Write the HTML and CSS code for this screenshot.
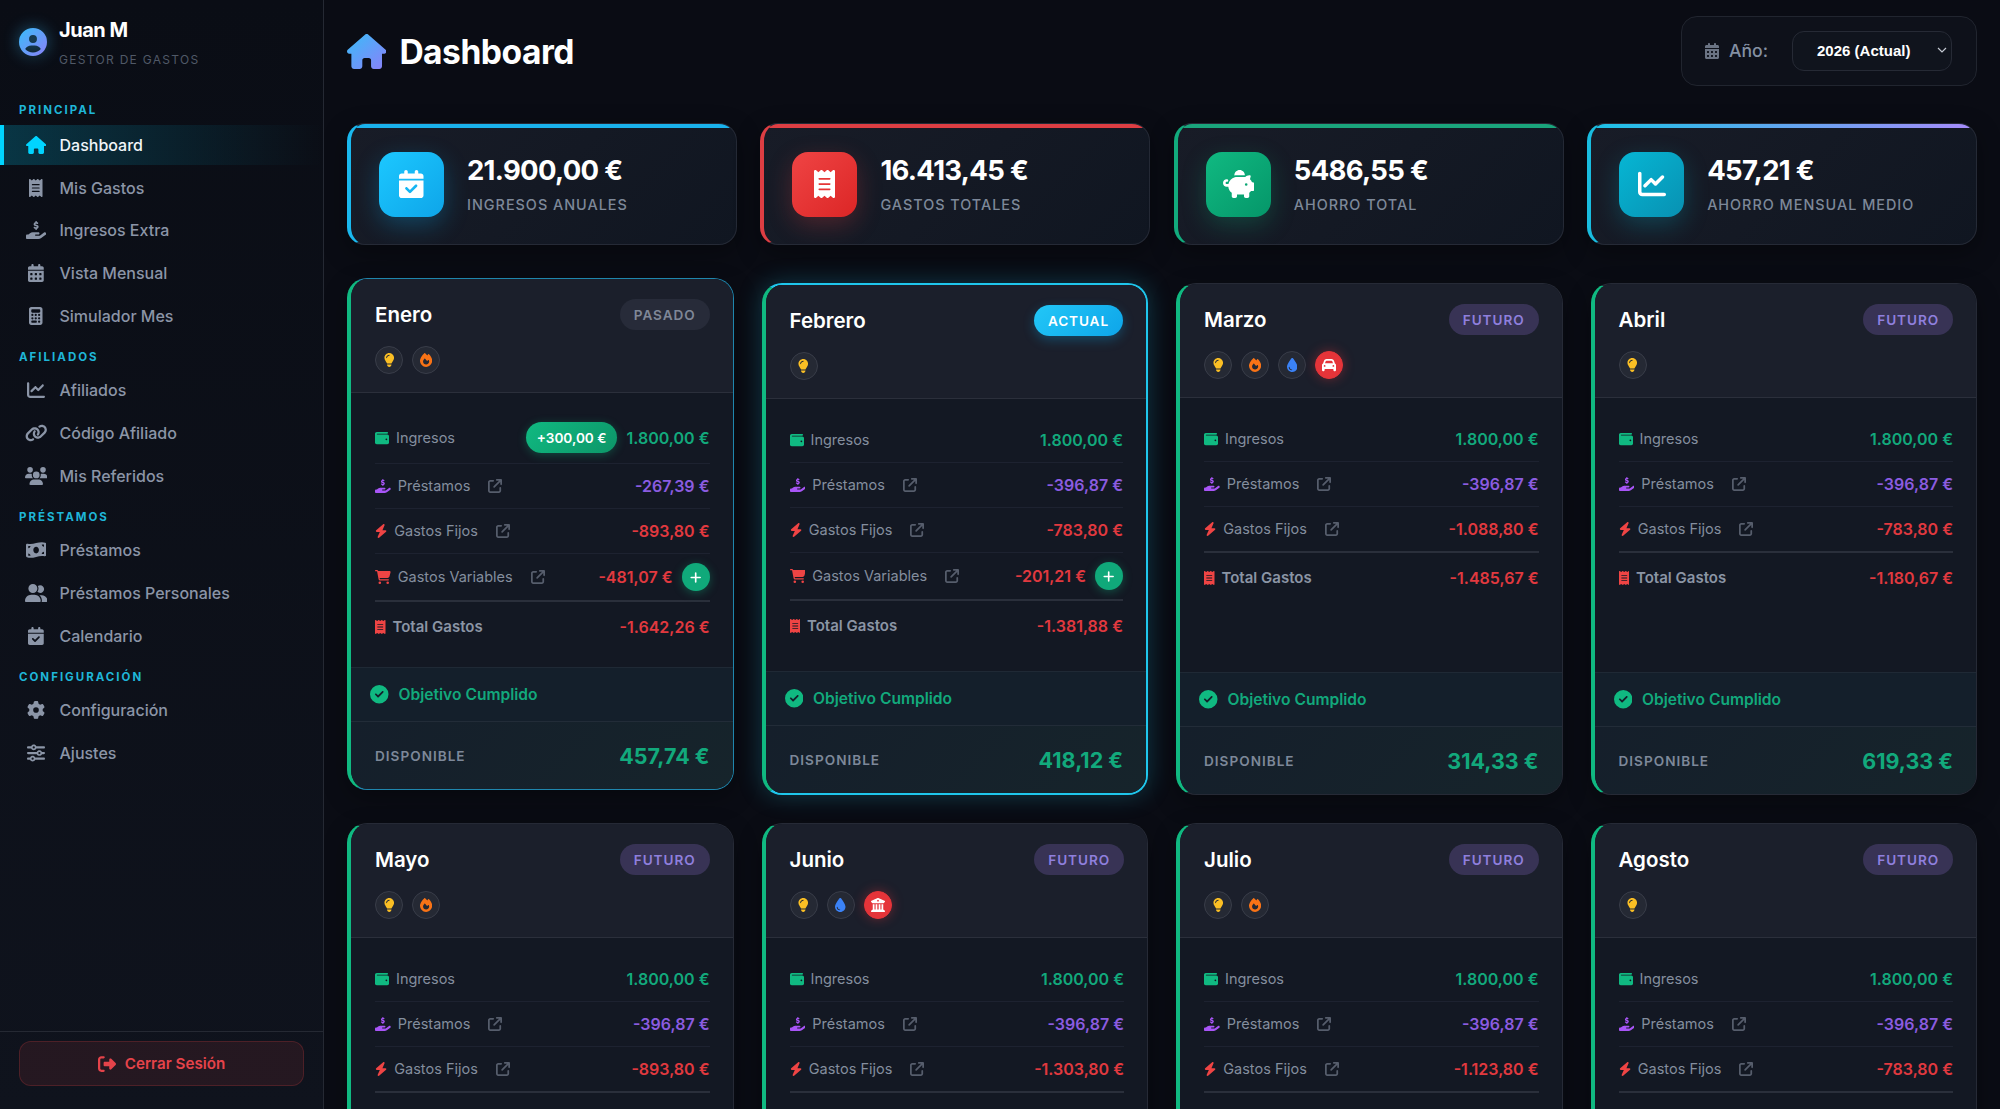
FILE: index.html
```html
<!DOCTYPE html>
<html lang="es">
<head>
  <meta charset="UTF-8">
  <title>Dashboard</title>
  <link rel="stylesheet" href="styles.css">
</head>
<body>
  <!-- Icon paths, reused below with <use> -->
  <svg class="sprite" aria-hidden="true">
    <defs>
      <linearGradient id="brand" x1="0" y1="0" x2="1" y2="1">
        <stop offset="0" stop-color="#38bdf8"/>
        <stop offset="1" stop-color="#8b80f9"/>
      </linearGradient>
      <path id="house" d="M575.8 255.5c0 18-15 32.1-32 32.1h-32l.7 160.2c0 2.7-.2 5.4-.5 8.1V472c0 22.1-17.9 40-40 40H456c-1.1 0-2.2 0-3.3-.1c-1.4 .1-2.8 .1-4.2 .1H416 392c-22.1 0-40-17.9-40-40V448 384c0-17.7-14.3-32-32-32H256c-17.7 0-32 14.3-32 32v64 24c0 22.1-17.9 40-40 40H160 128.1c-1.5 0-3-.1-4.5-.2c-1.2 .1-2.4 .2-3.6 .2H104c-22.1 0-40-17.9-40-40V360c0-.9 0-1.9 .1-2.8V287.6H32c-18 0-32-14-32-32.1c0-9 3-17 10-24L266.4 8c7-7 15-8 22-8s15 2 21 7L564.8 231.5c8 7 12 15 11 24z"/>
      <path id="receipt" d="M14 2.2C22.5-1.7 32.5-.3 39.6 5.8L80 40.4 120.4 5.8c9-7.7 22.3-7.7 31.2 0L192 40.4 232.4 5.8c9-7.7 22.3-7.7 31.2 0L304 40.4 344.4 5.8c7.1-6.1 17.1-7.5 25.6-3.6s14 12.4 14 21.8V488c0 9.4-5.5 17.9-14 21.8s-18.5 2.5-25.6-3.6L304 471.6l-40.4 34.6c-9 7.7-22.3 7.7-31.2 0L192 471.6l-40.4 34.6c-9 7.7-22.3 7.7-31.2 0L80 471.6 39.6 506.2c-7.1 6.1-17.1 7.5-25.6 3.6S0 497.4 0 488V24C0 14.6 5.5 6.1 14 2.2zM96 144c-8.8 0-16 7.2-16 16s7.2 16 16 16H288c8.8 0 16-7.2 16-16s-7.2-16-16-16H96zM80 352c0 8.8 7.2 16 16 16H288c8.8 0 16-7.2 16-16s-7.2-16-16-16H96c-8.8 0-16 7.2-16 16zM96 240c-8.8 0-16 7.2-16 16s7.2 16 16 16H288c8.8 0 16-7.2 16-16s-7.2-16-16-16H96z"/>
      <path id="hand" d="M312 24V34.5c6.4 1.2 12.6 2.7 18.2 4.2c12.8 3.4 20.4 16.6 17 29.4s-16.6 20.4-29.4 17c-10.9-2.9-21.1-4.9-30.2-5c-7.3-.1-14.7 1.7-19.4 4.4c-2.1 1.3-3.1 2.4-3.5 3c-.3 .5-.7 1.2-.7 2.8c0 .3 0 .5 0 .6c.2 .2 .9 1.2 3.3 2.6c5.8 3.5 14.4 6.2 27.4 10.1l.9 .3 0 0c11.1 3.3 25.9 7.8 37.9 15.3c13.7 8.6 26.1 22.9 26.4 44.9c.3 22.5-11.4 38.9-26.7 48.5c-6.7 4.1-13.9 7-21.3 8.8V232c0 13.3-10.7 24-24 24s-24-10.7-24-24V220.6c-9.5-2.3-18.2-5.3-25.6-7.8c-2.1-.7-4.1-1.4-6-2c-12.6-4.2-19.4-17.8-15.2-30.4s17.8-19.4 30.4-15.2c2.6 .9 5 1.7 7.3 2.5c13.6 4.6 23.4 7.9 33.9 8.3c8 .3 15.1-1.6 19.2-4.1c1.9-1.2 2.8-2.2 3.2-2.9c.4-.6 .9-1.8 .8-4.1l0-.2c0-1 0-2.1-4-4.6c-5.7-3.6-14.3-6.4-27.1-10.3l-1.9-.6c-10.8-3.2-25-7.5-36.4-14.4c-13.5-8.1-26.5-22-26.6-44.1c-.1-22.9 12.9-38.6 27.7-47.4c6.4-3.8 13.3-6.4 20.2-8.2V24c0-13.3 10.7-24 24-24s24 10.7 24 24zM568.2 336.3c13.1 17.8 9.3 42.8-8.5 55.9L433.1 485.5c-23.4 17.2-51.6 26.5-80.7 26.5H192 32c-17.7 0-32-14.3-32-32V416c0-17.7 14.3-32 32-32H68.8l44.9-36c22.7-18.2 50.9-28 80-28H272h16 64c17.7 0 32 14.3 32 32s-14.3 32-32 32H288 272c-8.8 0-16 7.2-16 16s7.2 16 16 16H392.6l119.7-88.2c17.8-13.1 42.8-9.3 55.9 8.5z"/>
      <path id="calendar" d="M128 0c17.7 0 32 14.3 32 32V64H288V32c0-17.7 14.3-32 32-32s32 14.3 32 32V64h48c26.5 0 48 21.5 48 48v48H0V112C0 85.5 21.5 64 48 64H96V32c0-17.7 14.3-32 32-32zM0 192H448V464c0 26.5-21.5 48-48 48H48c-26.5 0-48-21.5-48-48V192zm64 80v32c0 8.8 7.2 16 16 16h32c8.8 0 16-7.2 16-16V272c0-8.8-7.2-16-16-16H80c-8.8 0-16 7.2-16 16zm128 0v32c0 8.8 7.2 16 16 16h32c8.8 0 16-7.2 16-16V272c0-8.8-7.2-16-16-16H208c-8.8 0-16 7.2-16 16zm144-16c-8.8 0-16 7.2-16 16v32c0 8.8 7.2 16 16 16h32c8.8 0 16-7.2 16-16V272c0-8.8-7.2-16-16-16H336zM64 400v32c0 8.8 7.2 16 16 16h32c8.8 0 16-7.2 16-16V400c0-8.8-7.2-16-16-16H80c-8.8 0-16 7.2-16 16zm144-16c-8.8 0-16 7.2-16 16v32c0 8.8 7.2 16 16 16h32c8.8 0 16-7.2 16-16V400c0-8.8-7.2-16-16-16H208zm112 16v32c0 8.8 7.2 16 16 16h32c8.8 0 16-7.2 16-16V400c0-8.8-7.2-16-16-16H336c-8.8 0-16 7.2-16 16z"/>
      <path id="calcheck" d="M128 0c17.7 0 32 14.3 32 32V64H288V32c0-17.7 14.3-32 32-32s32 14.3 32 32V64h48c26.5 0 48 21.5 48 48v48H0V112C0 85.5 21.5 64 48 64H96V32c0-17.7 14.3-32 32-32zM0 192H448V464c0 26.5-21.5 48-48 48H48c-26.5 0-48-21.5-48-48V192zM329 305c9.4-9.4 9.4-24.6 0-33.9s-24.6-9.4-33.9 0l-95 95-47-47c-9.4-9.4-24.6-9.4-33.9 0s-9.4 24.6 0 33.9l64 64c9.4 9.4 24.6 9.4 33.9 0L329 305z"/>
      <path id="calculator" d="M64 0C28.7 0 0 28.7 0 64V448c0 35.3 28.7 64 64 64H320c35.3 0 64-28.7 64-64V64c0-35.3-28.7-64-64-64H64zM96 64H288c17.7 0 32 14.3 32 32v32c0 17.7-14.3 32-32 32H96c-17.7 0-32-14.3-32-32V96c0-17.7 14.3-32 32-32zm32 160a32 32 0 1 1 -64 0 32 32 0 1 1 64 0zM96 352a32 32 0 1 1 0-64 32 32 0 1 1 0 64zM64 416c0-17.7 14.3-32 32-32h96c17.7 0 32 14.3 32 32s-14.3 32-32 32H96c-17.7 0-32-14.3-32-32zM192 256a32 32 0 1 1 0-64 32 32 0 1 1 0 64zm32 64a32 32 0 1 1 -64 0 32 32 0 1 1 64 0zm64-64a32 32 0 1 1 0-64 32 32 0 1 1 0 64zm32 64a32 32 0 1 1 -64 0 32 32 0 1 1 64 0zM288 448a32 32 0 1 1 0-64 32 32 0 1 1 0 64z"/>
      <path id="chart" d="M64 64c0-17.7-14.3-32-32-32S0 46.3 0 64V400c0 44.2 35.8 80 80 80H480c17.7 0 32-14.3 32-32s-14.3-32-32-32H80c-8.8 0-16-7.2-16-16V64zm406.6 86.6c12.5-12.5 12.5-32.8 0-45.3s-32.8-12.5-45.3 0L320 210.7l-57.4-57.4c-12.5-12.5-32.8-12.5-45.3 0l-112 112c-12.5 12.5-12.5 32.8 0 45.3s32.8 12.5 45.3 0L240 221.3l57.4 57.4c12.5 12.5 32.8 12.5 45.3 0l128-128z"/>
      <path id="link" d="M579.8 267.7c56.5-56.5 56.5-148 0-204.5c-50-50-128.8-56.5-186.3-15.4l-1.6 1.1c-14.4 10.3-17.7 30.3-7.4 44.6s30.3 17.7 44.6 7.4l1.6-1.1c32.1-22.9 76-19.3 103.8 8.6c31.5 31.5 31.5 82.5 0 114L422.3 334.8c-31.5 31.5-82.5 31.5-114 0c-27.9-27.9-31.5-71.8-8.6-103.8l1.1-1.6c10.3-14.4 6.9-34.4-7.4-44.6s-34.4-6.9-44.6 7.4l-1.1 1.6C206.5 251.2 213 330 263 380c56.5 56.5 148 56.5 204.5 0L579.8 267.7zM60.2 244.3c-56.5 56.5-56.5 148 0 204.5c50 50 128.8 56.5 186.3 15.4l1.6-1.1c14.4-10.3 17.7-30.3 7.4-44.6s-30.3-17.7-44.6-7.4l-1.6 1.1c-32.1 22.9-76 19.3-103.8-8.6C74 372 74 321 105.5 289.5L217.7 177.2c31.5-31.5 82.5-31.5 114 0c27.9 27.9 31.5 71.8 8.6 103.9l-1.1 1.6c-10.3 14.4-6.9 34.4 7.4 44.6s34.4 6.9 44.6-7.4l1.1-1.6C433.5 260.8 427 182 377 132c-56.5-56.5-148-56.5-204.5 0L60.2 244.3z"/>
      <path id="users" d="M144 0a80 80 0 1 1 0 160A80 80 0 1 1 144 0zM512 0a80 80 0 1 1 0 160A80 80 0 1 1 512 0zM0 298.7C0 239.8 47.8 192 106.7 192h42.7c15.9 0 31 3.5 44.6 9.7c-1.3 7.2-1.9 14.7-1.9 22.3c0 38.2 16.8 72.5 43.3 96c-.2 0-.4 0-.7 0H21.3C9.6 320 0 310.4 0 298.7zM405.3 320c-.2 0-.4 0-.7 0c26.6-23.5 43.3-57.8 43.3-96c0-7.6-.7-15-1.9-22.3c13.6-6.3 28.7-9.7 44.6-9.7h42.7C592.2 192 640 239.8 640 298.7c0 11.8-9.6 21.3-21.3 21.3H405.3zM224 224a96 96 0 1 1 192 0 96 96 0 1 1 -192 0zM128 485.3C128 411.7 187.7 352 261.3 352H378.7C452.3 352 512 411.7 512 485.3c0 14.7-11.9 26.7-26.7 26.7H154.7c-14.7 0-26.7-11.9-26.7-26.7z"/>
      <path id="money" d="M0 112.5V422.3c0 18 10.1 35 27 41.3c87 32.5 174 10.3 261-11.9c79.8-20.3 159.6-40.7 239.3-18.9c23 6.3 48.7-9.5 48.7-33.4V89.7c0-18-10.1-35-27-41.3C462 15.9 375 38.1 288 60.3C208.2 80.6 128.4 100.9 48.7 79.1C25.6 72.8 0 88.6 0 112.5zM288 352c-44.2 0-80-43-80-96s35.8-96 80-96s80 43 80 96s-35.8 96-80 96zM64 352c35.3 0 64 28.7 64 64H64V352zm64-208c0 35.3-28.7 64-64 64V144h64zM512 304v64H448c0-35.3 28.7-64 64-64zM448 96h64v64c-35.3 0-64-28.7-64-64z"/>
      <path id="group" d="M96 128a128 128 0 1 1 256 0A128 128 0 1 1 96 128zM0 482.3C0 383.8 79.8 304 178.3 304h91.4C368.2 304 448 383.8 448 482.3c0 16.4-13.3 29.7-29.7 29.7H29.7C13.3 512 0 498.7 0 482.3zM609.3 512H471.4c5.4-9.4 8.6-20.3 8.6-32v-8c0-60.7-27.1-115.2-69.8-151.8c2.4-.1 4.7-.2 7.1-.2h61.4C567.8 320 640 392.2 640 481.3c0 17-13.8 30.7-30.7 30.7zM432 256c-31 0-59-12.6-79.3-32.9C372.4 196.5 384 163.6 384 128c0-26.8-6.6-52.1-18.3-74.3C384.3 40.1 407.2 32 432 32c61.9 0 112 50.1 112 112s-50.1 112-112 112z"/>
      <path id="gear" d="M495.9 166.6c3.2 8.7 .5 18.4-6.4 24.6l-43.3 39.4c1.1 8.3 1.7 16.8 1.7 25.4s-.6 17.1-1.7 25.4l43.3 39.4c6.9 6.2 9.6 15.9 6.4 24.6c-4.4 11.9-9.7 23.3-15.8 34.3l-4.7 8.1c-6.6 11-14 21.4-22.1 31.2c-5.9 7.2-15.7 9.6-24.5 6.8l-55.7-17.7c-13.4 10.3-28.2 18.9-44 25.4l-12.5 57.1c-2 9.1-9 16.3-18.2 17.8c-13.8 2.3-28 3.5-42.5 3.5s-28.7-1.2-42.5-3.5c-9.2-1.5-16.2-8.7-18.2-17.8l-12.5-57.1c-15.8-6.5-30.6-15.1-44-25.4L83.1 425.9c-8.8 2.8-18.6 .3-24.5-6.8c-8.1-9.8-15.5-20.2-22.1-31.2l-4.7-8.1c-6.1-11-11.4-22.4-15.8-34.3c-3.2-8.7-.5-18.4 6.4-24.6l43.3-39.4C64.6 273.1 64 264.6 64 256s.6-17.1 1.7-25.4L22.4 191.2c-6.9-6.2-9.6-15.9-6.4-24.6c4.4-11.9 9.7-23.3 15.8-34.3l4.7-8.1c6.6-11 14-21.4 22.1-31.2c5.9-7.2 15.7-9.6 24.5-6.8l55.7 17.7c13.4-10.3 28.2-18.9 44-25.4l12.5-57.1c2-9.1 9-16.3 18.2-17.8C227.3 1.2 241.5 0 256 0s28.7 1.2 42.5 3.5c9.2 1.5 16.2 8.7 18.2 17.8l12.5 57.1c15.8 6.5 30.6 15.1 44 25.4l55.7-17.7c8.8-2.8 18.6-.3 24.5 6.8c8.1 9.8 15.5 20.2 22.1 31.2l4.7 8.1c6.1 11 11.4 22.4 15.8 34.3zM256 336a80 80 0 1 0 0-160 80 80 0 1 0 0 160z"/>
      <path id="sliders" d="M0 416c0 17.7 14.3 32 32 32l54.7 0c12.3 28.3 40.5 48 73.3 48s61-19.7 73.3-48L480 448c17.7 0 32-14.3 32-32s-14.3-32-32-32l-246.7 0c-12.3-28.3-40.5-48-73.3-48s-61 19.7-73.3 48L32 384c-17.7 0-32 14.3-32 32zm128 0a32 32 0 1 1 64 0 32 32 0 1 1 -64 0zM320 256a32 32 0 1 1 64 0 32 32 0 1 1 -64 0zm32-80c-32.8 0-61 19.7-73.3 48L32 224c-17.7 0-32 14.3-32 32s14.3 32 32 32l246.7 0c12.3 28.3 40.5 48 73.3 48s61-19.7 73.3-48l54.7 0c17.7 0 32-14.3 32-32s-14.3-32-32-32l-54.7 0c-12.3-28.3-40.5-48-73.3-48zM192 128a32 32 0 1 1 0-64 32 32 0 1 1 0 64zm73.3-64C253 35.7 224.8 16 192 16s-61 19.7-73.3 48L32 64C14.3 64 0 78.3 0 96s14.3 32 32 32l86.7 0c12.3 28.3 40.5 48 73.3 48s61-19.7 73.3-48L480 128c17.7 0 32-14.3 32-32s-14.3-32-32-32L265.3 64z"/>
      <path id="logout" d="M377.9 105.9L500.7 228.7c7.2 7.2 11.3 17.1 11.3 27.3s-4.1 20.1-11.3 27.3L377.9 406.1c-6.4 6.4-15 9.9-24 9.9c-18.7 0-33.9-15.2-33.9-33.9l0-62.1-128 0c-17.7 0-32-14.3-32-32l0-64c0-17.7 14.3-32 32-32l128 0 0-62.1c0-18.7 15.2-33.9 33.9-33.9c9 0 17.6 3.6 24 9.9zM160 96L96 96c-17.7 0-32 14.3-32 32l0 256c0 17.7 14.3 32 32 32l64 0c17.7 0 32 14.3 32 32s-14.3 32-32 32l-64 0c-53 0-96-43-96-96L0 128C0 75 43 32 96 32l64 0c17.7 0 32 14.3 32 32s-14.3 32-32 32z"/>
      <path id="wallet" d="M64 32C28.7 32 0 60.7 0 96V416c0 35.3 28.7 64 64 64H448c35.3 0 64-28.7 64-64V192c0-35.3-28.7-64-64-64H80c-8.8 0-16-7.2-16-16s7.2-16 16-16H448c17.7 0 32-14.3 32-32s-14.3-32-32-32H64zM416 272a32 32 0 1 1 0 64 32 32 0 1 1 0-64z"/>
      <path id="bolt" d="M349.4 44.6c5.9-13.7 1.5-29.7-10.6-38.5s-28.6-8-39.9 1.8l-256 224c-10 8.8-13.6 22.9-8.9 35.3S50.7 288 64 288H175.5L98.6 467.4c-5.9 13.7-1.5 29.7 10.6 38.5s28.6 8 39.9-1.8l256-224c10-8.8 13.6-22.9 8.9-35.3s-16.6-20.7-30-20.7H272.5L349.4 44.6z"/>
      <path id="cart" d="M0 24C0 10.7 10.7 0 24 0H69.5c22 0 41.5 12.8 50.6 32h411c26.3 0 45.5 25 38.6 50.4l-41 152.3c-8.5 31.4-37 53.3-69.5 53.3H170.7l5.4 28.5c2.2 11.3 12.1 19.5 23.6 19.5H488c13.3 0 24 10.7 24 24s-10.7 24-24 24H199.7c-34.6 0-64.3-24.6-70.7-58.5L77.4 54.5c-.7-3.8-4-6.5-7.9-6.5H24C10.7 48 0 37.3 0 24zM128 464a48 48 0 1 1 96 0 48 48 0 1 1 -96 0zm336-48a48 48 0 1 1 0 96 48 48 0 1 1 0-96z"/>
      <path id="ext" d="M320 0c-17.7 0-32 14.3-32 32s14.3 32 32 32h82.7L201.4 265.4c-12.5 12.5-12.5 32.8 0 45.3s32.8 12.5 45.3 0L448 109.3V192c0 17.7 14.3 32 32 32s32-14.3 32-32V32c0-17.7-14.3-32-32-32H320zM80 32C35.8 32 0 67.8 0 112V432c0 44.2 35.8 80 80 80H400c44.2 0 80-35.8 80-80V320c0-17.7-14.3-32-32-32s-32 14.3-32 32V432c0 8.8-7.2 16-16 16H80c-8.8 0-16-7.2-16-16V112c0-8.8 7.2-16 16-16H192c17.7 0 32-14.3 32-32s-14.3-32-32-32H80z"/>
      <path id="check" d="M256 512A256 256 0 1 0 256 0a256 256 0 1 0 0 512zM369 209L241 337c-9.4 9.4-24.6 9.4-33.9 0l-64-64c-9.4-9.4-9.4-24.6 0-33.9s24.6-9.4 33.9 0l47 47L335 175c9.4-9.4 24.6-9.4 33.9 0s9.4 24.6 0 33.9z"/>
      <path id="bulb" d="M272 384c9.6-31.9 29.5-59.1 49.2-86.2l0 0c5.2-7.1 10.4-14.2 15.4-21.4c19.8-28.5 31.4-63 31.4-100.3C368 78.8 289.2 0 192 0S16 78.8 16 176c0 37.3 11.6 71.9 31.4 100.3c5 7.2 10.2 14.3 15.4 21.4l0 0c19.8 27.1 39.7 54.4 49.2 86.2H272zM192 512c44.2 0 80-35.8 80-80V416H112v16c0 44.2 35.8 80 80 80zM112 176c0 8.8-7.2 16-16 16s-16-7.2-16-16c0-61.9 50.1-112 112-112c8.8 0 16 7.2 16 16s-7.2 16-16 16c-44.2 0-80 35.8-80 80z"/>
      <path id="fire" d="M159.3 5.4c7.8-7.3 19.9-7.2 27.7 .1c27.6 25.9 53.5 53.8 77.7 84c11-14.4 23.5-30.1 37-42.9c7.9-7.4 20.1-7.4 28 .1c34.6 33 63.9 76.6 84.5 118c20.3 40.8 33.8 82.5 33.8 111.9C448 404.2 348.2 512 224 512C98.4 512 0 404.1 0 276.5c0-38.4 17.8-85.3 45.4-131.7C73.3 97.7 112.7 48.6 159.3 5.4zM225.7 416c25.3 0 47.7-7 68.8-21c42.1-29.4 53.4-88.2 28.1-134.4c-4.5-9-16-9.6-22.5-2l-25.2 29.3c-6.6 7.6-18.5 7.4-24.7-.5c-16.5-21-46-58.5-62.8-79.8c-6.3-8-18.3-8.1-24.7-.1c-33.8 42.5-50.8 69.3-50.8 99.4C112 375.4 162.6 416 225.7 416z"/>
      <path id="drop" d="M192 512C86 512 0 426 0 320C0 228.8 130.2 57.7 166.6 11.7C172.6 4.2 181.5 0 191.1 0h1.8c9.6 0 18.5 4.2 24.5 11.7C253.8 57.7 384 228.8 384 320c0 106-86 192-192 192zM96 336c0-8.8-7.2-16-16-16s-16 7.2-16 16c0 61.9 50.1 112 112 112c8.8 0 16-7.2 16-16s-7.2-16-16-16c-44.2 0-80-35.8-80-80z"/>
      <path id="car" d="M135.2 117.4L109.1 192H402.9l-26.1-74.6C372.3 104.6 360.2 96 346.6 96H165.4c-13.6 0-25.7 8.6-30.2 21.4zM39.6 196.8L74.8 96.3C88.3 57.8 124.6 32 165.4 32H346.6c40.8 0 77.1 25.8 90.6 64.3l35.2 100.5c23.2 9.6 39.6 32.5 39.6 59.2V400v48c0 17.7-14.3 32-32 32H448c-17.7 0-32-14.3-32-32V400H96v48c0 17.7-14.3 32-32 32H32c-17.7 0-32-14.3-32-32V400 256c0-26.7 16.4-49.6 39.6-59.2zM128 288a32 32 0 1 0 -64 0 32 32 0 1 0 64 0zm288 32a32 32 0 1 0 0-64 32 32 0 1 0 0 64z"/>
      <path id="bank" d="M243.4 2.6l-224 96c-14 6-21.8 21-18.7 35.8S16.8 160 32 160v8c0 13.3 10.7 24 24 24H456c13.3 0 24-10.7 24-24v-8c15.2 0 28.3-10.7 31.3-25.6s-4.8-29.9-18.7-35.8l-224-96c-8-3.4-17.2-3.4-25.2 0zM128 224H64V420.3c-.6 .3-1.2 .7-1.8 1.1l-48 32c-11.7 7.8-17 22.4-12.9 35.9S17.9 512 32 512H480c14.1 0 26.5-9.2 30.6-22.7s-1.1-28.1-12.9-35.9l-48-32c-.6-.4-1.2-.7-1.8-1.1V224H384V416H344V224H280V416H232V224H168V416H128V224zM256 64a32 32 0 1 1 0 64 32 32 0 1 1 0-64z"/>
      <path id="piggy" d="M400 96l0 .7c-5.3-.4-10.6-.7-16-.7H256c-16.5 0-32.5 2.1-47.8 6c-.1-2-.2-4-.2-6c0-53 43-96 96-96s96 43 96 96zm-16 32c3.5 0 7 .1 10.4 .3c4.2 .3 8.4 .7 12.6 1.3C424.6 109.1 450.8 96 480 96h11.5c10.4 0 18 9.8 15.5 19.9l-13.8 55.2c15.8 14.8 28.7 32.8 37.5 52.9H544c17.7 0 32 14.3 32 32v96c0 17.7-14.3 32-32 32H512c-9.1 12.1-19.9 22.9-32 32v64c0 17.7-14.3 32-32 32H416c-17.7 0-32-14.3-32-32V448H256v32c0 17.7-14.3 32-32 32H192c-17.7 0-32-14.3-32-32V416c-34.9-26.2-58.7-66.3-63.2-112H68c-37.6 0-68-30.4-68-68s30.4-68 68-68h4c13.3 0 24 10.7 24 24s-10.7 24-24 24H68c-11 0-20 9-20 20s9 20 20 20H99.2c12.1-59.8 57.7-107.5 116.3-122.8c12.9-3.4 26.5-5.2 40.5-5.2H384zm64 136a24 24 0 1 0 -48 0 24 24 0 1 0 48 0z"/>
      <path id="user" d="M399 384.2C376.9 345.8 335.4 320 288 320H224c-47.4 0-88.9 25.8-111 64.2c35.2 39.2 86.2 63.8 143 63.8s107.8-24.7 143-63.8zM0 256a256 256 0 1 1 512 0A256 256 0 1 1 0 256zm256 16a72 72 0 1 0 0-144 72 72 0 1 0 0 144z"/>
      <path id="plus" d="M256 80c0-17.7-14.3-32-32-32s-32 14.3-32 32V224H48c-17.7 0-32 14.3-32 32s14.3 32 32 32H192V432c0 17.7 14.3 32 32 32s32-14.3 32-32V288H400c17.7 0 32-14.3 32-32s-14.3-32-32-32H256V80z"/>
    </defs>
  </svg>

  <div class="app">
    <aside class="sidebar">
      <div class="side-head">
        <svg class="avatar" viewBox="0 0 512 512"><use href="#user"/></svg>
        <div>
          <div class="side-name">Juan M</div>
          <div class="side-sub">GESTOR DE GASTOS</div>
        </div>
      </div>

      <nav class="side-nav">
        <div class="nav-title">PRINCIPAL</div>
        <a class="nav-item active"><span class="nav-ic"><svg viewBox="0 0 576 512"><use href="#house"/></svg></span>Dashboard</a>
        <a class="nav-item"><span class="nav-ic"><svg viewBox="0 0 384 512"><use href="#receipt"/></svg></span>Mis Gastos</a>
        <a class="nav-item"><span class="nav-ic"><svg viewBox="0 0 576 512"><use href="#hand"/></svg></span>Ingresos Extra</a>
        <a class="nav-item"><span class="nav-ic"><svg viewBox="0 0 448 512"><use href="#calendar"/></svg></span>Vista Mensual</a>
        <a class="nav-item"><span class="nav-ic"><svg viewBox="0 0 384 512"><use href="#calculator"/></svg></span>Simulador Mes</a>

        <div class="nav-title">AFILIADOS</div>
        <a class="nav-item"><span class="nav-ic"><svg viewBox="0 0 512 512"><use href="#chart"/></svg></span>Afiliados</a>
        <a class="nav-item"><span class="nav-ic"><svg viewBox="0 0 640 512"><use href="#link"/></svg></span>Código Afiliado</a>
        <a class="nav-item"><span class="nav-ic"><svg viewBox="0 0 640 512"><use href="#users"/></svg></span>Mis Referidos</a>

        <div class="nav-title">PRÉSTAMOS</div>
        <a class="nav-item"><span class="nav-ic"><svg viewBox="0 0 576 512"><use href="#money"/></svg></span>Préstamos</a>
        <a class="nav-item"><span class="nav-ic"><svg viewBox="0 0 640 512"><use href="#group"/></svg></span>Préstamos Personales</a>
        <a class="nav-item"><span class="nav-ic"><svg viewBox="0 0 448 512"><use href="#calcheck"/></svg></span>Calendario</a>

        <div class="nav-title">CONFIGURACIÓN</div>
        <a class="nav-item"><span class="nav-ic"><svg viewBox="0 0 512 512"><use href="#gear"/></svg></span>Configuración</a>
        <a class="nav-item"><span class="nav-ic"><svg viewBox="0 0 512 512"><use href="#sliders"/></svg></span>Ajustes</a>
      </nav>

      <div class="side-foot">
        <button class="logout-btn"><svg viewBox="0 0 512 512"><use href="#logout"/></svg>Cerrar Sesión</button>
      </div>
    </aside>

    <main class="main">
      <header class="top-bar">
        <h1 class="page-title"><svg viewBox="0 0 576 512"><use href="#house"/></svg>Dashboard</h1>
        <div class="year-box">
          <svg class="year-ic" viewBox="0 0 448 512"><use href="#calendar"/></svg>
          <span class="year-label">Año:</span>
          <div class="year-select">
            <span>2026 (Actual)</span>
            <svg viewBox="0 0 12 12"><path d="M2 4l4 4 4-4" fill="none" stroke="currentColor" stroke-width="1.2"/></svg>
          </div>
        </div>
      </header>

      <section class="stats">
        <div class="stat stat-blue">
          <div class="stat-ic"><svg viewBox="0 0 448 512"><use href="#calcheck"/></svg></div>
          <div class="stat-text"><div class="stat-value">21.900,00 €</div><div class="stat-label">INGRESOS ANUALES</div></div>
        </div>
        <div class="stat stat-red">
          <div class="stat-ic"><svg viewBox="0 0 384 512"><use href="#receipt"/></svg></div>
          <div class="stat-text"><div class="stat-value">16.413,45 €</div><div class="stat-label">GASTOS TOTALES</div></div>
        </div>
        <div class="stat stat-green">
          <div class="stat-ic"><svg viewBox="0 0 576 512"><use href="#piggy"/></svg></div>
          <div class="stat-text"><div class="stat-value">5486,55 €</div><div class="stat-label">AHORRO TOTAL</div></div>
        </div>
        <div class="stat stat-teal">
          <div class="stat-ic"><svg viewBox="0 0 512 512"><use href="#chart"/></svg></div>
          <div class="stat-text"><div class="stat-value">457,21 €</div><div class="stat-label">AHORRO MENSUAL MEDIO</div></div>
        </div>
      </section>

      <section class="months">
        <!-- Enero -->
        <article class="month month-hover">
          <div class="month-head">
            <div class="month-top"><h3>Enero</h3><span class="chip chip-past">PASADO</span></div>
            <div class="badges">
              <span class="badge b-bulb"><svg viewBox="0 0 384 512"><use href="#bulb"/></svg></span>
              <span class="badge b-fire"><svg viewBox="0 0 448 512"><use href="#fire"/></svg></span>
            </div>
          </div>
          <div class="month-body">
            <div class="row"><span class="row-label"><svg class="c-green" viewBox="0 0 512 512"><use href="#wallet"/></svg>Ingresos</span><span class="row-right"><span class="extra-chip">+300,00 €</span><span class="val c-green">1.800,00 €</span></span></div>
            <div class="row"><span class="row-label"><svg class="c-purple" viewBox="0 0 576 512"><use href="#hand"/></svg>Préstamos<svg class="ext" viewBox="0 0 512 512"><use href="#ext"/></svg></span><span class="val c-purple">-267,39 €</span></div>
            <div class="row"><span class="row-label"><svg class="c-red" viewBox="0 0 448 512"><use href="#bolt"/></svg>Gastos Fijos<svg class="ext" viewBox="0 0 512 512"><use href="#ext"/></svg></span><span class="val c-red">-893,80 €</span></div>
            <div class="row"><span class="row-label"><svg class="c-red" viewBox="0 0 576 512"><use href="#cart"/></svg>Gastos Variables<svg class="ext" viewBox="0 0 512 512"><use href="#ext"/></svg></span><span class="row-right"><span class="val c-red">-481,07 €</span><span class="plus-btn"><svg viewBox="0 0 448 512"><use href="#plus"/></svg></span></span></div>
            <div class="row row-total"><span class="row-label"><svg class="c-red" viewBox="0 0 384 512"><use href="#receipt"/></svg>Total Gastos</span><span class="val c-red">-1.642,26 €</span></div>
          </div>
          <div class="goal"><svg viewBox="0 0 512 512"><use href="#check"/></svg>Objetivo Cumplido</div>
          <div class="avail"><span class="avail-label">DISPONIBLE</span><span class="avail-value">457,74 €</span></div>
        </article>

        <!-- Febrero -->
        <article class="month month-now">
          <div class="month-head">
            <div class="month-top"><h3>Febrero</h3><span class="chip chip-now">ACTUAL</span></div>
            <div class="badges">
              <span class="badge b-bulb"><svg viewBox="0 0 384 512"><use href="#bulb"/></svg></span>
            </div>
          </div>
          <div class="month-body">
            <div class="row"><span class="row-label"><svg class="c-green" viewBox="0 0 512 512"><use href="#wallet"/></svg>Ingresos</span><span class="val c-green">1.800,00 €</span></div>
            <div class="row"><span class="row-label"><svg class="c-purple" viewBox="0 0 576 512"><use href="#hand"/></svg>Préstamos<svg class="ext" viewBox="0 0 512 512"><use href="#ext"/></svg></span><span class="val c-purple">-396,87 €</span></div>
            <div class="row"><span class="row-label"><svg class="c-red" viewBox="0 0 448 512"><use href="#bolt"/></svg>Gastos Fijos<svg class="ext" viewBox="0 0 512 512"><use href="#ext"/></svg></span><span class="val c-red">-783,80 €</span></div>
            <div class="row"><span class="row-label"><svg class="c-red" viewBox="0 0 576 512"><use href="#cart"/></svg>Gastos Variables<svg class="ext" viewBox="0 0 512 512"><use href="#ext"/></svg></span><span class="row-right"><span class="val c-red">-201,21 €</span><span class="plus-btn"><svg viewBox="0 0 448 512"><use href="#plus"/></svg></span></span></div>
            <div class="row row-total"><span class="row-label"><svg class="c-red" viewBox="0 0 384 512"><use href="#receipt"/></svg>Total Gastos</span><span class="val c-red">-1.381,88 €</span></div>
          </div>
          <div class="goal"><svg viewBox="0 0 512 512"><use href="#check"/></svg>Objetivo Cumplido</div>
          <div class="avail"><span class="avail-label">DISPONIBLE</span><span class="avail-value">418,12 €</span></div>
        </article>

        <!-- Marzo -->
        <article class="month">
          <div class="month-head">
            <div class="month-top"><h3>Marzo</h3><span class="chip chip-future">FUTURO</span></div>
            <div class="badges">
              <span class="badge b-bulb"><svg viewBox="0 0 384 512"><use href="#bulb"/></svg></span>
              <span class="badge b-fire"><svg viewBox="0 0 448 512"><use href="#fire"/></svg></span>
              <span class="badge b-drop"><svg viewBox="0 0 384 512"><use href="#drop"/></svg></span>
              <span class="badge b-alert"><svg viewBox="0 0 512 512"><use href="#car"/></svg></span>
            </div>
          </div>
          <div class="month-body">
            <div class="row"><span class="row-label"><svg class="c-green" viewBox="0 0 512 512"><use href="#wallet"/></svg>Ingresos</span><span class="val c-green">1.800,00 €</span></div>
            <div class="row"><span class="row-label"><svg class="c-purple" viewBox="0 0 576 512"><use href="#hand"/></svg>Préstamos<svg class="ext" viewBox="0 0 512 512"><use href="#ext"/></svg></span><span class="val c-purple">-396,87 €</span></div>
            <div class="row"><span class="row-label"><svg class="c-red" viewBox="0 0 448 512"><use href="#bolt"/></svg>Gastos Fijos<svg class="ext" viewBox="0 0 512 512"><use href="#ext"/></svg></span><span class="val c-red">-1.088,80 €</span></div>
            <div class="row row-total"><span class="row-label"><svg class="c-red" viewBox="0 0 384 512"><use href="#receipt"/></svg>Total Gastos</span><span class="val c-red">-1.485,67 €</span></div>
          </div>
          <div class="goal"><svg viewBox="0 0 512 512"><use href="#check"/></svg>Objetivo Cumplido</div>
          <div class="avail"><span class="avail-label">DISPONIBLE</span><span class="avail-value">314,33 €</span></div>
        </article>

        <!-- Abril -->
        <article class="month">
          <div class="month-head">
            <div class="month-top"><h3>Abril</h3><span class="chip chip-future">FUTURO</span></div>
            <div class="badges">
              <span class="badge b-bulb"><svg viewBox="0 0 384 512"><use href="#bulb"/></svg></span>
            </div>
          </div>
          <div class="month-body">
            <div class="row"><span class="row-label"><svg class="c-green" viewBox="0 0 512 512"><use href="#wallet"/></svg>Ingresos</span><span class="val c-green">1.800,00 €</span></div>
            <div class="row"><span class="row-label"><svg class="c-purple" viewBox="0 0 576 512"><use href="#hand"/></svg>Préstamos<svg class="ext" viewBox="0 0 512 512"><use href="#ext"/></svg></span><span class="val c-purple">-396,87 €</span></div>
            <div class="row"><span class="row-label"><svg class="c-red" viewBox="0 0 448 512"><use href="#bolt"/></svg>Gastos Fijos<svg class="ext" viewBox="0 0 512 512"><use href="#ext"/></svg></span><span class="val c-red">-783,80 €</span></div>
            <div class="row row-total"><span class="row-label"><svg class="c-red" viewBox="0 0 384 512"><use href="#receipt"/></svg>Total Gastos</span><span class="val c-red">-1.180,67 €</span></div>
          </div>
          <div class="goal"><svg viewBox="0 0 512 512"><use href="#check"/></svg>Objetivo Cumplido</div>
          <div class="avail"><span class="avail-label">DISPONIBLE</span><span class="avail-value">619,33 €</span></div>
        </article>

        <!-- Mayo -->
        <article class="month">
          <div class="month-head">
            <div class="month-top"><h3>Mayo</h3><span class="chip chip-future">FUTURO</span></div>
            <div class="badges">
              <span class="badge b-bulb"><svg viewBox="0 0 384 512"><use href="#bulb"/></svg></span>
              <span class="badge b-fire"><svg viewBox="0 0 448 512"><use href="#fire"/></svg></span>
            </div>
          </div>
          <div class="month-body">
            <div class="row"><span class="row-label"><svg class="c-green" viewBox="0 0 512 512"><use href="#wallet"/></svg>Ingresos</span><span class="val c-green">1.800,00 €</span></div>
            <div class="row"><span class="row-label"><svg class="c-purple" viewBox="0 0 576 512"><use href="#hand"/></svg>Préstamos<svg class="ext" viewBox="0 0 512 512"><use href="#ext"/></svg></span><span class="val c-purple">-396,87 €</span></div>
            <div class="row"><span class="row-label"><svg class="c-red" viewBox="0 0 448 512"><use href="#bolt"/></svg>Gastos Fijos<svg class="ext" viewBox="0 0 512 512"><use href="#ext"/></svg></span><span class="val c-red">-893,80 €</span></div>
            <div class="row row-total"></div>
          </div>
        </article>

        <!-- Junio -->
        <article class="month">
          <div class="month-head">
            <div class="month-top"><h3>Junio</h3><span class="chip chip-future">FUTURO</span></div>
            <div class="badges">
              <span class="badge b-bulb"><svg viewBox="0 0 384 512"><use href="#bulb"/></svg></span>
              <span class="badge b-drop"><svg viewBox="0 0 384 512"><use href="#drop"/></svg></span>
              <span class="badge b-alert"><svg viewBox="0 0 512 512"><use href="#bank"/></svg></span>
            </div>
          </div>
          <div class="month-body">
            <div class="row"><span class="row-label"><svg class="c-green" viewBox="0 0 512 512"><use href="#wallet"/></svg>Ingresos</span><span class="val c-green">1.800,00 €</span></div>
            <div class="row"><span class="row-label"><svg class="c-purple" viewBox="0 0 576 512"><use href="#hand"/></svg>Préstamos<svg class="ext" viewBox="0 0 512 512"><use href="#ext"/></svg></span><span class="val c-purple">-396,87 €</span></div>
            <div class="row"><span class="row-label"><svg class="c-red" viewBox="0 0 448 512"><use href="#bolt"/></svg>Gastos Fijos<svg class="ext" viewBox="0 0 512 512"><use href="#ext"/></svg></span><span class="val c-red">-1.303,80 €</span></div>
            <div class="row row-total"></div>
          </div>
        </article>

        <!-- Julio -->
        <article class="month">
          <div class="month-head">
            <div class="month-top"><h3>Julio</h3><span class="chip chip-future">FUTURO</span></div>
            <div class="badges">
              <span class="badge b-bulb"><svg viewBox="0 0 384 512"><use href="#bulb"/></svg></span>
              <span class="badge b-fire"><svg viewBox="0 0 448 512"><use href="#fire"/></svg></span>
            </div>
          </div>
          <div class="month-body">
            <div class="row"><span class="row-label"><svg class="c-green" viewBox="0 0 512 512"><use href="#wallet"/></svg>Ingresos</span><span class="val c-green">1.800,00 €</span></div>
            <div class="row"><span class="row-label"><svg class="c-purple" viewBox="0 0 576 512"><use href="#hand"/></svg>Préstamos<svg class="ext" viewBox="0 0 512 512"><use href="#ext"/></svg></span><span class="val c-purple">-396,87 €</span></div>
            <div class="row"><span class="row-label"><svg class="c-red" viewBox="0 0 448 512"><use href="#bolt"/></svg>Gastos Fijos<svg class="ext" viewBox="0 0 512 512"><use href="#ext"/></svg></span><span class="val c-red">-1.123,80 €</span></div>
            <div class="row row-total"></div>
          </div>
        </article>

        <!-- Agosto -->
        <article class="month">
          <div class="month-head">
            <div class="month-top"><h3>Agosto</h3><span class="chip chip-future">FUTURO</span></div>
            <div class="badges">
              <span class="badge b-bulb"><svg viewBox="0 0 384 512"><use href="#bulb"/></svg></span>
            </div>
          </div>
          <div class="month-body">
            <div class="row"><span class="row-label"><svg class="c-green" viewBox="0 0 512 512"><use href="#wallet"/></svg>Ingresos</span><span class="val c-green">1.800,00 €</span></div>
            <div class="row"><span class="row-label"><svg class="c-purple" viewBox="0 0 576 512"><use href="#hand"/></svg>Préstamos<svg class="ext" viewBox="0 0 512 512"><use href="#ext"/></svg></span><span class="val c-purple">-396,87 €</span></div>
            <div class="row"><span class="row-label"><svg class="c-red" viewBox="0 0 448 512"><use href="#bolt"/></svg>Gastos Fijos<svg class="ext" viewBox="0 0 512 512"><use href="#ext"/></svg></span><span class="val c-red">-783,80 €</span></div>
            <div class="row row-total"></div>
          </div>
        </article>
      </section>
    </main>
  </div>
</body>
</html>
```

FILE: styles.css
```css
* {
  box-sizing: border-box;
}
html, body {
  height: 100%;
  margin: 0;
  overflow: hidden;
}
body {
  font-family: Inter, 'Noto Sans', sans-serif;
  background-color: #0a0c14;
  color: #fff;
}
svg {
  fill: currentColor;
  display: block;
}
.sprite {
  position: absolute;
  width: 0;
  height: 0;
}
.app {
  display: flex;
  height: 100vh;
}

/* Sidebar */
.sidebar {
  width: 324px;
  flex-shrink: 0;
  display: flex;
  flex-direction: column;
  background: linear-gradient(180deg, #0a0d15 0%, #0f131d 100%);
  border-right: 1px solid #252933;
}
.side-head {
  display: flex;
  align-items: center;
  gap: 12px;
  padding: 18px 19px 0;
  margin-bottom: 36.5px;
}
.avatar {
  width: 28px;
  height: 28px;
  fill: url(#brand);
  filter: drop-shadow(0 0 8px rgba(56, 189, 248, 0.45));
}
.side-name {
  font-size: 20px;
  line-height: 24px;
  font-weight: 700;
  letter-spacing: -0.5px;
}
.side-sub {
  font-size: 12px;
  line-height: 15px;
  margin-top: 9.5px;
  letter-spacing: 1.3px;
  color: #505967;
}
.nav-title {
  font-size: 11.5px;
  line-height: 14px;
  font-weight: 700;
  letter-spacing: 2px;
  color: #1fb6d8;
  padding-left: 19px;
  margin: 13.25px 0 6.5px;
}
.nav-title:first-child {
  margin: 0 0 7.5px;
}
.nav-item {
  display: flex;
  align-items: center;
  gap: 11.5px;
  height: 40.75px;
  margin-bottom: 2px;
  padding-left: 20px;
  border-left: 4px solid transparent;
  font-size: 16px;
  font-weight: 500;
  color: #8b95a7;
}
.nav-item.active {
  border-left-color: #00d4ff;
  background: linear-gradient(90deg, rgba(0, 212, 255, 0.2) 0%, rgba(0, 212, 255, 0) 100%);
  color: #f1f5f9;
}
.nav-ic {
  width: 24px;
  display: flex;
  justify-content: center;
}
.nav-ic svg {
  height: 18px;
}
.nav-item.active .nav-ic {
  color: #00d4ff;
}
.side-foot {
  margin-top: auto;
  padding: 9px 19px 23px;
  border-top: 1px solid #252933;
}
.logout-btn {
  width: 100%;
  height: 45px;
  display: flex;
  align-items: center;
  justify-content: center;
  gap: 9px;
  background-color: rgba(239, 68, 68, 0.1);
  border: 1px solid rgba(239, 68, 68, 0.2);
  border-radius: 12px;
  color: #e5434a;
  font-family: inherit;
  font-size: 15.2px;
  font-weight: 600;
}
.logout-btn svg {
  height: 18px;
}

/* Main */
.main {
  flex: 1;
  min-width: 0;
  padding: 16px 23px 0;
  overflow: hidden;
}
.top-bar {
  display: flex;
  align-items: center;
  justify-content: space-between;
  height: 70px;
  margin-bottom: 37px;
}
.page-title {
  display: flex;
  align-items: center;
  gap: 13px;
  margin: 0;
  font-size: 33.6px;
  font-weight: 700;
  letter-spacing: -0.5px;
}
.page-title svg {
  height: 35px;
  fill: url(#brand);
}
.year-box {
  display: flex;
  align-items: center;
  width: 296px;
  height: 70px;
  padding: 0 24px 0 23px;
  border: 1px solid #21252f;
  border-radius: 16px;
  background-color: #0e111a;
}
.year-ic {
  height: 16px;
  color: #6b7484;
}
.year-label {
  margin: 0 24px 0 10px;
  font-size: 17.6px;
  line-height: 22px;
  padding-bottom: 1px;
  font-weight: 500;
  color: #8490a3;
}
.year-select {
  flex: 1;
  height: 40px;
  display: flex;
  align-items: center;
  justify-content: space-between;
  padding: 0 3px 2px 24px;
  border: 1px solid #262a35;
  border-radius: 12px;
  background-color: #10141d;
  font-family: 'Liberation Sans', Arial, sans-serif;
  font-size: 15px;
  font-weight: 700;
}
.year-select svg {
  width: 12px;
  height: 12px;
  color: #c4c9d2;
}
.stats {
  display: grid;
  grid-template-columns: repeat(4, 1fr);
  gap: 23.5px;
  margin-bottom: 38px;
}
.stat {
  position: relative;
  display: flex;
  align-items: center;
  gap: 23px;
  height: 122px;
  padding-left: 28px;
  overflow: hidden;
  background: linear-gradient(135deg, #181c27 0%, #101621 100%);
  border: 1px solid #252a36;
  border-left: 4px solid var(--accent);
  border-radius: 18px;
  box-shadow: 0 8px 24px rgba(0, 0, 0, 0.35);
}
.stat::before {
  content: '';
  position: absolute;
  top: 0;
  left: -4px;
  right: 0;
  height: 4px;
  background: var(--bar);
}
.stat-blue {
  --accent: #1ab8ee;
  --bar: #1ab2ec;
}
.stat-red {
  --accent: #dd3e43;
  --bar: #dd3e43;
}
.stat-green {
  --accent: #12ab7d;
  --bar: #1aa57c;
}
.stat-teal {
  --accent: #19bcdf;
  --bar: linear-gradient(90deg, #19c3e6 0%, #a78bfa 100%);
}
.stat-ic {
  width: 65px;
  height: 65px;
  display: flex;
  align-items: center;
  justify-content: center;
  flex-shrink: 0;
  border-radius: 16px;
}
.stat-ic svg {
  height: 28px;
}
.stat-blue .stat-ic {
  background: linear-gradient(135deg, #1cc8ff, #0ea5e9);
  box-shadow: 0 8px 24px rgba(14, 165, 233, 0.3);
}
.stat-red .stat-ic {
  background: linear-gradient(135deg, #ef4444, #dc2626);
  box-shadow: 0 8px 24px rgba(239, 68, 68, 0.25);
}
.stat-green .stat-ic {
  background: linear-gradient(135deg, #10b981, #059669);
  box-shadow: 0 8px 24px rgba(16, 185, 129, 0.25);
}
.stat-teal .stat-ic {
  background: linear-gradient(135deg, #06b6d4, #0891b2);
  box-shadow: 0 8px 24px rgba(6, 182, 212, 0.25);
}
.stat-text {
  padding-bottom: 2px;
}
.stat-value {
  font-size: 27.5px;
  line-height: 34px;
  font-weight: 700;
  letter-spacing: -0.7px;
}
.stat-label {
  margin-top: 9px;
  font-size: 14.4px;
  line-height: 18px;
  font-weight: 500;
  letter-spacing: 1px;
  color: #7d8899;
}

/* Month cards */
.months {
  display: grid;
  grid-template-columns: repeat(4, 1fr);
  gap: 28px;
}
.month {
  display: flex;
  flex-direction: column;
  overflow: hidden;
  background-color: #131823;
  border: 1px solid #262a36;
  border-left: 4px solid #10b981;
  border-radius: 20px;
  box-shadow: 0 8px 24px rgba(0, 0, 0, 0.3);
}
.month-hover {
  transform: translateY(-5px);
  border-color: #1f86ad;
  border-left-color: #10b981;
}
.month-now {
  border: 2px solid #1fc6ec;
  border-left: 4px solid #10b981;
  box-shadow: 0 0 24px rgba(31, 198, 236, 0.25);
}
.month-head {
  padding: 20px 23px 18px 24px;
  background-color: #1b1f2b;
  border-bottom: 1px solid #2b2f3b;
}
.month-top {
  display: flex;
  align-items: center;
  justify-content: space-between;
  margin-bottom: 16px;
}
.month-top h3 {
  margin: 0;
  font-size: 20.5px;
  font-weight: 600;
}
.chip {
  height: 31px;
  display: flex;
  align-items: center;
  padding: 0 14px;
  border-radius: 16px;
  font-size: 13.6px;
  font-weight: 600;
  letter-spacing: 0.9px;
}
.chip-past {
  background-color: #272b39;
  color: #7f8797;
}
.chip-future {
  background-color: #383355;
  color: #8f7fdd;
}
.chip-now {
  background: linear-gradient(135deg, #22c7f7, #0ea5e9);
  box-shadow: 0 4px 12px rgba(14, 165, 233, 0.3);
  color: #fff;
}
.badges {
  display: flex;
  gap: 9px;
}
.badge {
  width: 28px;
  height: 28px;
  display: flex;
  align-items: center;
  justify-content: center;
  background-color: #252934;
  border: 1px solid #393d49;
  border-radius: 50%;
}
.badge svg {
  height: 14px;
}
.b-bulb {
  color: #fbbf24;
}
.b-fire {
  color: #f97316;
}
.b-drop {
  color: #3b82f6;
}
.b-alert {
  background-color: #e53439;
  border-color: #e53439;
  color: #fff;
  box-shadow: 0 0 12px rgba(229, 52, 57, 0.4);
}
.month-body {
  flex: 1;
  padding: 19px 23px 18.5px 24px;
}
.row {
  display: flex;
  align-items: center;
  justify-content: space-between;
  padding: 10px 0;
  border-bottom: 1px solid #1d2230;
  min-height: 45px;
}
.row:nth-last-child(2) {
  border-bottom: 0;
  min-height: 44px;
}
.row:has(.plus-btn) {
  padding: 9px 0;
  min-height: 46px;
}
.row-total {
  border-top: 2px solid #2a2f3b;
  border-bottom: 0;
  padding: 12.5px 0 10px;
  min-height: 48.5px;
}
.row-label {
  display: flex;
  align-items: center;
  gap: 7px;
  font-size: 14.5px;
  line-height: 24px;
  color: #848e9e;
}
.row-label svg {
  height: 14px;
}
.row-label .ext {
  margin-left: 11px;
  color: #565d6c;
}
.row-total .row-label {
  font-size: 15px;
  font-weight: 600;
  color: #8b95a5;
}
.row-right {
  display: flex;
  align-items: center;
  gap: 9px;
}
.val {
  font-size: 16px;
  line-height: 24px;
  font-weight: 600;
}
.c-green {
  color: #12a97c;
}
.c-purple {
  color: #8b5ce0;
}
.c-red {
  color: #e1393f;
}
.row-label .c-red {
  color: #ef4444;
}
.row-label .c-purple {
  color: #a855f7;
}
.row-label .c-green {
  color: #10b981;
}
.extra-chip {
  height: 31px;
  display: flex;
  align-items: center;
  padding: 0 11px;
  border-radius: 16px;
  background: linear-gradient(135deg, #10b981, #0d9668);
  box-shadow: 0 2px 10px rgba(16, 185, 129, 0.3);
  font-size: 13.6px;
  font-weight: 600;
}
.plus-btn {
  width: 28px;
  height: 28px;
  display: flex;
  align-items: center;
  justify-content: center;
  border-radius: 50%;
  background-color: #10a97a;
  box-shadow: 0 2px 10px rgba(16, 185, 129, 0.35);
}
.plus-btn svg {
  height: 13px;
}
.goal {
  display: flex;
  align-items: center;
  gap: 10px;
  height: 54px;
  padding-left: 19px;
  background-color: #141f2b;
  border-top: 1px solid #1f2935;
  font-size: 15.6px;
  font-weight: 600;
  color: #12a97c;
}
.goal svg {
  height: 18.5px;
  color: #10b981;
}
.avail {
  display: flex;
  align-items: center;
  justify-content: space-between;
  height: 68px;
  padding: 0 23px 0 24px;
  background: linear-gradient(135deg, #151f2b, #16242b);
  border-top: 1px solid #222c38;
}
.avail-label {
  font-size: 13.6px;
  font-weight: 600;
  letter-spacing: 1px;
  color: #7d8899;
}
.avail-value {
  font-size: 21.5px;
  font-weight: 700;
  color: #12a97c;
}
```
